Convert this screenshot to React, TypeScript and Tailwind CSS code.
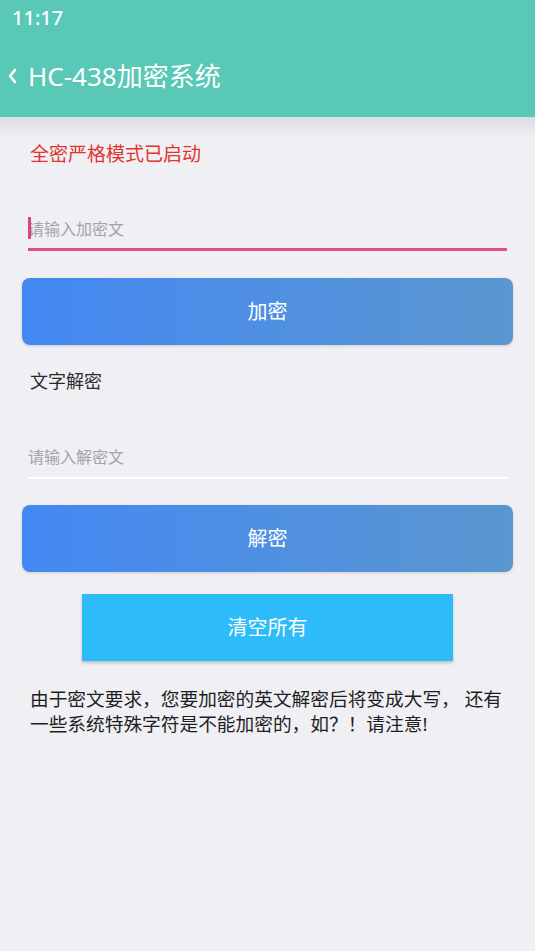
import React from "react";

const font = { fontFamily: '"Noto Sans", "Noto Sans CJK SC", sans-serif' };

export default function App() {
  return (
    <div className="min-h-[951px] w-[535px] bg-[#efeff4] flex flex-col" style={font}>
      {/* status bar + toolbar */}
      <div className="bg-[#59c8b6]">
        <div className="h-[35px] flex items-center px-3 text-white text-[20px] font-medium">11:17</div>
        <div className="h-[82px] flex items-center">
          <svg width="28" height="20" viewBox="0 0 28 20" className="shrink-0">
            <path d="M15 4 L10 10 L15 16" fill="none" stroke="white" strokeWidth="2.6" strokeLinecap="round" strokeLinejoin="round" />
          </svg>
          <span className="text-white text-[26px] leading-none">HC-438加密系统</span>
        </div>
      </div>
      <div className="h-[22px] bg-gradient-to-b from-[#dcdce1] to-[#efeff4] -mb-[22px]" />

      <div className="flex flex-col px-[22px]">
        <p className="mt-[24px] pl-[8px] text-[19px] leading-[26px] text-[#e1352c]">全密严格模式已启动</p>

        {/* encrypt input */}
        <div className="mt-[50px] mx-[6px]">
          <div className="relative h-[24px] flex items-center text-[16px] text-[#a4a4a8]">
            <span className="absolute left-0 top-0 w-[3px] h-[22px] bg-[#d9467a]" />
            请输入加密文
          </div>
          <div className="mt-[7px] h-[3px] bg-[#e0517f]" />
        </div>

        <button className="mt-[27px] h-[67px] rounded-[8px] bg-gradient-to-r from-[#4488f4] to-[#5a96cf] text-white text-[20px] shadow-[0_1px_3px_rgba(0,0,0,0.15)]">
          加密
        </button>

        <p className="mt-[23px] pl-[8px] text-[18px] leading-[26px] text-[#2a2a2a]">文字解密</p>

        {/* decrypt input */}
        <div className="mt-[51px] mx-[6px]">
          <div className="h-[24px] flex items-center text-[16px] text-[#a4a4a8]">请输入解密文</div>
          <div className="mt-[8px] h-[2px] bg-white" />
        </div>

        <button className="mt-[26px] h-[67px] rounded-[8px] bg-gradient-to-r from-[#4488f4] to-[#5a96cf] text-white text-[20px] shadow-[0_1px_3px_rgba(0,0,0,0.15)]">
          解密
        </button>

        <div className="flex justify-center">
          <button className="mt-[22px] w-[371px] h-[67px] bg-[#2dbcf9] text-white text-[20px] shadow-[0_2px_3px_rgba(0,0,0,0.2)]">
            清空所有
          </button>
        </div>

        <p className="mt-[25px] pl-[8px] pr-[8px] text-[18.7px] leading-[25px] text-[#1e1e1e]">
          由于密文要求，您要加密的英文解密后将变成大写， 还有一些系统特殊字符是不能加密的，如？！请注意!
        </p>
      </div>
    </div>
  );
}
